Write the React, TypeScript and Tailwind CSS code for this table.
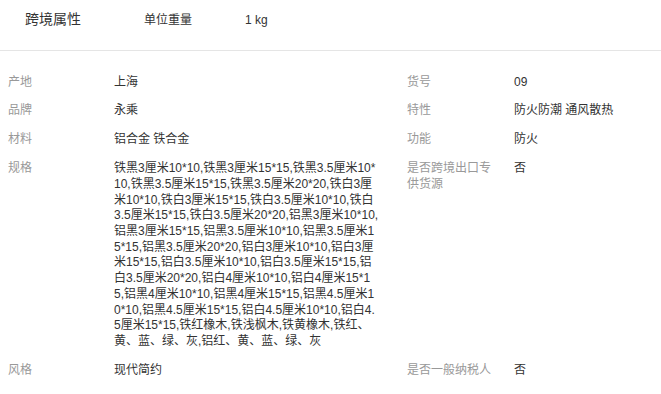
const specs =
  '铁黑3厘米10*10,铁黑3厘米15*15,铁黑3.5厘米10*10,铁黑3.5厘米15*15,铁黑3.5厘米20*20,铁白3厘米10*10,铁白3厘米15*15,铁白3.5厘米10*10,铁白3.5厘米15*15,铁白3.5厘米20*20,铝黑3厘米10*10,铝黑3厘米15*15,铝黑3.5厘米10*10,铝黑3.5厘米15*15,铝黑3.5厘米20*20,铝白3厘米10*10,铝白3厘米15*15,铝白3.5厘米10*10,铝白3.5厘米15*15,铝白3.5厘米20*20,铝白4厘米10*10,铝白4厘米15*15,铝黑4厘米10*10,铝黑4厘米15*15,铝黑4.5厘米10*10,铝黑4.5厘米15*15,铝白4.5厘米10*10,铝白4.5厘米15*15,铁红橡木,铁浅枫木,铁黄橡木,铁红、黄、蓝、绿、灰,铝红、黄、蓝、绿、灰'

const rows = [
  { l: '产地', v: '上海', rl: '货号', rv: '09' },
  { l: '品牌', v: '永乘', rl: '特性', rv: '防火防潮 通风散热' },
  { l: '材料', v: '铝合金 铁合金', rl: '功能', rv: '防火' },
  { l: '规格', v: specs, rl: '是否跨境出口专供货源', rv: '否' },
  { l: '风格', v: '现代简约', rl: '是否一般纳税人', rv: '否' },
]

export default function App() {
  return (
    <div className="w-[661px] h-[394px] bg-white overflow-hidden font-['Liberation_Sans','Noto_Sans_CJK_SC',sans-serif]">
      <header className="flex items-center h-[51px] pb-[11px] border-b border-[#e5e5e5] text-[#333]">
        <span className="w-[144px] pl-[25px] text-[14px]">跨境属性</span>
        <span className="w-[101px] text-[12px]">单位重量</span>
        <span className="text-[12px]">1 kg</span>
      </header>

      <div className="pt-[17px] text-[12px] leading-[15.7px]">
        {rows.map((r) => (
          <div key={r.l} className="flex py-[6.6px]">
            <div className="w-[114px] pl-[8px] text-[#999]">{r.l}</div>
            <div className="w-[265px] break-all text-[#333]">{r.v}</div>
            <div className="w-[28px]" />
            <div className="w-[107px] pr-[16px] text-[#999]">{r.rl}</div>
            <div className="flex-1 text-[#333]">{r.rv}</div>
          </div>
        ))}
      </div>
    </div>
  )
}
